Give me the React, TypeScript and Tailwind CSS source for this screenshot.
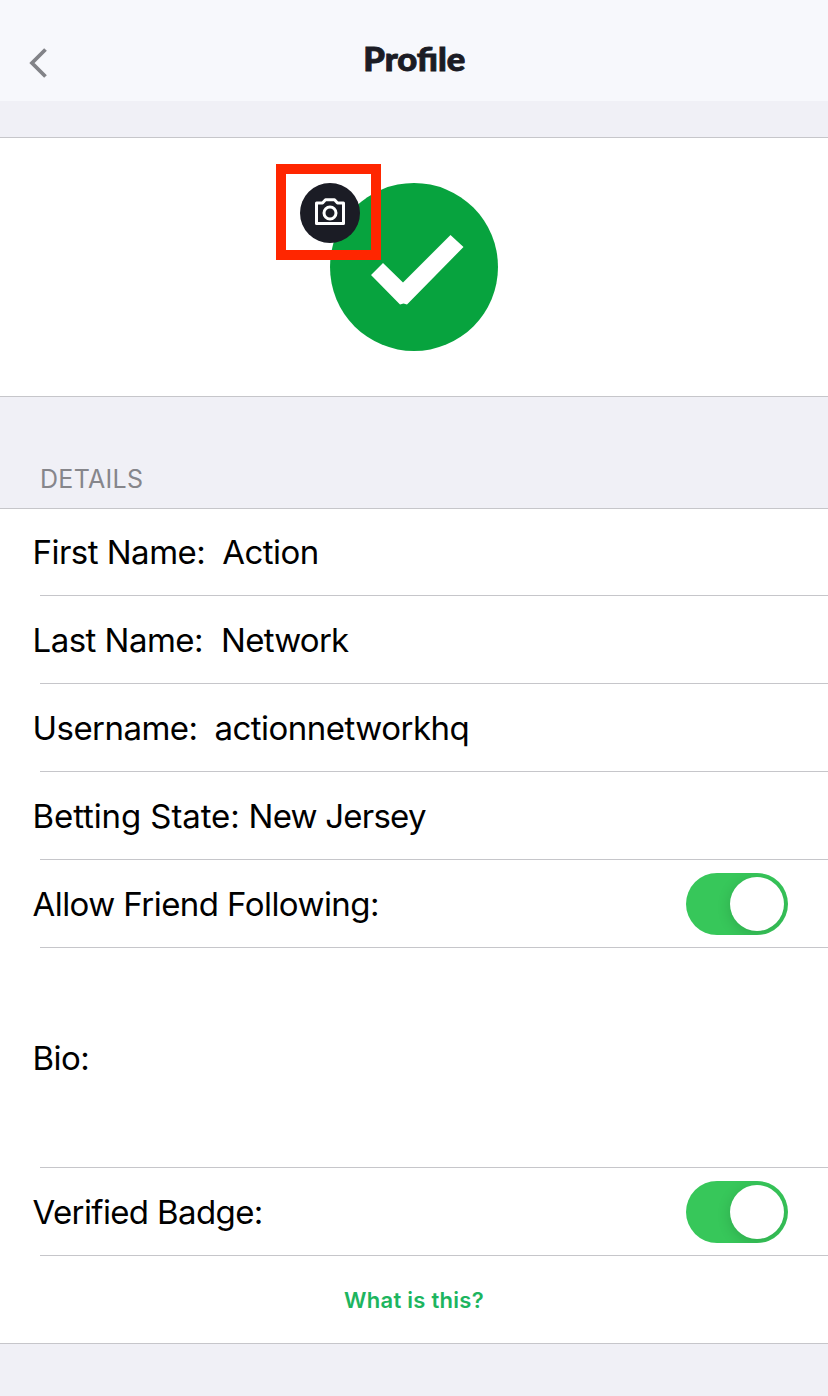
const fields = [
	{ label: "First Name:", value: "Action", height: "h-[87px]", labelStyle: "tracking-[-0.52px]", valueStyle: "ml-[17px] tracking-[-0.55px]" },
	{ label: "Last Name:", value: "Network", height: "h-[88px]", labelStyle: "tracking-[-0.52px]", valueStyle: "ml-[18px] tracking-[-0.75px]" },
	{ label: "Username:", value: "actionnetworkhq", height: "h-[88px]", labelStyle: "tracking-[-0.55px]", valueStyle: "ml-[17px] tracking-[-0.5px]" },
	{ label: "Betting State:", value: "New Jersey", height: "h-[88px]", labelStyle: "tracking-[-0.1px]", valueStyle: "ml-[9px] tracking-[-0.78px]" },
	{ label: "Allow Friend Following:", toggle: true, height: "h-[88px]", labelStyle: "tracking-[-0.56px]" },
	{ label: "Bio:", height: "h-[220px]", labelStyle: "tracking-[-0.5px]" },
	{ label: "Verified Badge:", toggle: true, height: "h-[88px]", labelStyle: "tracking-[-0.62px]" },
];

const Toggle = () => {
	return (
		<button
			role="switch"
			aria-checked="true"
			className="flex h-[62px] w-[102px] items-center justify-end overflow-hidden rounded-full bg-[#37c75a] pr-1"
		>
			<span className="h-[54px] w-[54px] rounded-full bg-white shadow-[0_3px_14px_rgba(0,0,0,0.15)]"></span>
		</button>
	);
};

const CameraIcon = () => {
	return (
		<svg
			width="30"
			height="28"
			viewBox="0 0 30 28"
			fill="none"
			stroke="#fff"
			strokeWidth="3"
			strokeLinejoin="round"
			className="-mt-[3px]"
		>
			<path d="M1.500 5H7.500L10.500 1.800H19.500L22.500 5H28.500V25.500H1.500Z" />
			<circle cx="15" cy="15" r="6" />
		</svg>
	);
};

const Avatar = () => {
	return (
		<div className="relative h-[168px] w-[168px]">
			<svg width="168" height="168" viewBox="0 0 168 168">
				<circle cx="84" cy="84" r="84" fill="#07a33e" />
				<path d="M120.500 52L133.500 64L77 121.500L73.500 120.500L70 121.500L41 92L53 80L73 99.500Z" fill="#fff" />
			</svg>
			<div className="absolute -left-[30px] top-0 flex h-[60px] w-[60px] items-center justify-center rounded-full bg-[#1b1c25]">
				<CameraIcon />
			</div>
			<div className="absolute -left-[54px] -top-[19px] h-24 w-[105px] border-10 border-[#ff2600]"></div>
		</div>
	);
};

const App = () => {
	return (
		<div className="flex min-h-screen flex-col bg-[#f0f0f6] font-[Inter,sans-serif] text-black">
			<header className="grid h-[101px] grid-cols-[1fr_auto_1fr] items-center bg-[#f7f8fc] pt-6">
				<button aria-label="Back" className="ml-[29px] w-fit">
					<svg width="19" height="30" viewBox="0 0 19 30" fill="none" stroke="#828388" strokeWidth="3.8">
						<path d="M16.500 1.500L3 15L16.500 28.500" />
					</svg>
				</button>
				<h1 className="mb-2 scale-x-108 font-[Lato,sans-serif] text-[32px] leading-none font-black text-[#1b1c25] [-webkit-text-stroke:0.9px_#1b1c25]">
					Profile
				</h1>
			</header>

			{/* Photo */}
			<section className="mt-9 flex h-[260px] justify-center border-y border-[#c6c6ca] bg-white pt-[45px]">
				<Avatar />
			</section>

			{/* Details */}
			<h2 className="flex h-[111px] items-end pb-[14px] pl-10 text-[25px] leading-[30px] tracking-[0.3px] text-[#86868b]">
				DETAILS
			</h2>
			<section className="border-y border-[#c6c6ca] bg-white text-[33px]">
				{fields.map(({ label, value, toggle, height, labelStyle, valueStyle }) => (
					<div key={label} className={`flex flex-col ${height}`}>
						<div className="flex flex-1 items-center pr-10 pl-[32.5px]">
							<span className={`pt-0.5 ${labelStyle}`}>{label}</span>
							{value && <span className={`pt-0.5 ${valueStyle}`}>{value}</span>}
							{toggle && (
								<div className="ml-auto">
									<Toggle />
								</div>
							)}
						</div>
						<div className="ml-10 h-px bg-[#c6c6ca]"></div>
					</div>
				))}
				<div className="flex h-[87px] items-center justify-center pt-0.5">
					<a href="#" className="text-[22px] font-semibold tracking-[0.27px] text-[#1db55f]">
						What is this?
					</a>
				</div>
			</section>
		</div>
	);
};

export default App;
